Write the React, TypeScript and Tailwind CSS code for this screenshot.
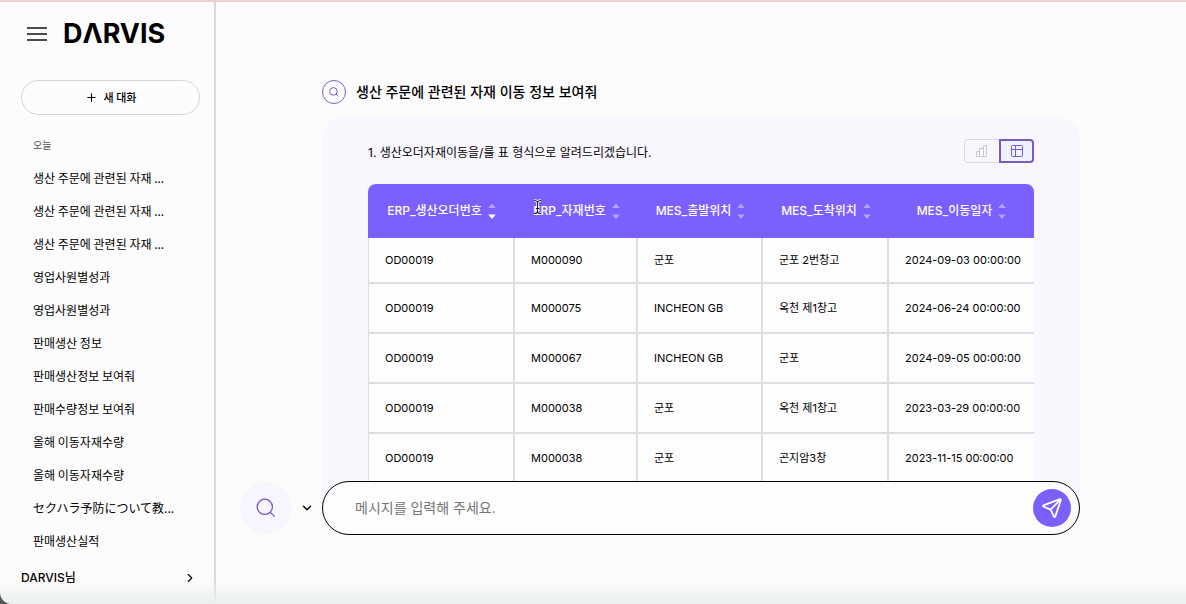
import { ChevronDown, ChevronRight, Plus } from "lucide-react";

type Movement = {
  order: string;
  material: string;
  from: string;
  to: string;
  date: string;
};

const history = [
  "생산 주문에 관련된 자재 ...",
  "생산 주문에 관련된 자재 ...",
  "생산 주문에 관련된 자재 ...",
  "영업사원별성과",
  "영업사원별성과",
  "판매생산 정보",
  "판매생산정보 보여줘",
  "판매수량정보 보여줘",
  "올해 이동자재수량",
  "올해 이동자재수량",
  "セクハラ予防について教...",
  "판매생산실적",
];

const columns = [
  { label: "ERP_생산오더번호", width: "w-[147px]", sorted: true },
  { label: "ERP_자재번호", width: "w-[123px]", hovered: true },
  { label: "MES_출발위치", width: "w-[125px]" },
  { label: "MES_도착위치", width: "w-[126px]" },
  { label: "MES_이동일자", width: "w-auto" },
];

const movements: Movement[] = [
  { order: "OD00019", material: "M000090", from: "군포", to: "군포 2번창고", date: "2024-09-03 00:00:00" },
  { order: "OD00019", material: "M000075", from: "INCHEON GB", to: "옥천 제1창고", date: "2024-06-24 00:00:00" },
  { order: "OD00019", material: "M000067", from: "INCHEON GB", to: "군포", date: "2024-09-05 00:00:00" },
  { order: "OD00019", material: "M000038", from: "군포", to: "옥천 제1창고", date: "2023-03-29 00:00:00" },
  { order: "OD00019", material: "M000038", from: "군포", to: "곤지암3창", date: "2023-11-15 00:00:00" },
];

const SearchIcon = ({ className }: { className: string }) => (
  <svg viewBox="0 0 20 20" fill="none" stroke="currentColor" className={className}>
    <circle cx="8.8" cy="8.8" r="7.6" />
    <path d="M14.2 14.2 L18.6 18.6" />
  </svg>
);

const SortArrows = ({ sorted }: { sorted?: boolean }) => (
  <svg viewBox="0 0 8 16" className="h-4 w-2 shrink-0">
    <path d="M4 0.5 L7.8 5 H0.2 Z" fill="#b3a2ff" />
    <path d="M4 16 L7.8 11.5 H0.2 Z" fill={sorted ? "#ffffff" : "#b3a2ff"} />
  </svg>
);

// text cursor resting over a header label
const TextCursor = () => (
  <svg viewBox="0 0 9 16" className="absolute -top-1 left-0 h-4 w-[9px]" fill="none">
    <path d="M1 1.5 Q4.5 1.5 4.5 3.5 Q4.5 1.5 8 1.5 M4.5 3 V13 M1 14.5 Q4.5 14.5 4.5 12.5 Q4.5 14.5 8 14.5 M3 9.5 H6" stroke="#fff" strokeWidth="2.6" />
    <path d="M1 1.5 Q4.5 1.5 4.5 3.5 Q4.5 1.5 8 1.5 M4.5 3 V13 M1 14.5 Q4.5 14.5 4.5 12.5 Q4.5 14.5 8 14.5 M3 9.5 H6" stroke="#222" strokeWidth="1.1" />
  </svg>
);

const Sidebar = () => (
  <aside className="flex w-54 shrink-0 flex-col border-r-2 border-[#dadada] font-['Noto_Sans_CJK_KR',sans-serif]">
    <div className="flex h-16 items-center gap-4 pl-[27px] font-['Inter',sans-serif]">
      <button aria-label="메뉴">
        <svg viewBox="0 0 20 14" className="h-[14px] w-5" stroke="#111" strokeWidth="1.6">
          <path d="M0 1 H20 M0 7 H20 M0 13 H20" />
        </svg>
      </button>
      <a href="#" aria-label="DARVIS" className="text-[27px] leading-8 font-bold">
        DΛRVIS
      </a>
    </div>
    <button className="mt-[14px] mr-[14px] ml-[21px] flex h-[35px] shrink-0 items-center justify-center gap-[6px] rounded-full border border-[#d5d3df] text-[11px] font-medium">
      <Plus size={13} strokeWidth={2} />
      새 대화
    </button>
    <h2 className="mt-[22px] pl-[33px] text-[10px] leading-4 text-[#555]">오늘</h2>
    <ul className="mt-2 flex-1">
      {history.map((title, i) => (
        <li key={i}>
          <a href="#" className="block h-[33px] truncate pr-6 pl-[33px] leading-[33px]">
            {title}
          </a>
        </li>
      ))}
    </ul>
    <button className="mb-4 flex h-5 items-center justify-between pr-[17px] pl-[21px] font-['Inter','Noto_Sans_CJK_KR',sans-serif] font-medium">
      DARVIS님
      <ChevronRight size={14} strokeWidth={2} />
    </button>
  </aside>
);

const ViewToggle = () => (
  <div className="flex h-6">
    <button aria-label="차트" className="flex w-[35px] items-center justify-center rounded-l border border-r-0 border-[#dcdde3] text-[#c9c9d0]">
      <svg viewBox="0 0 12 12" className="size-3" fill="none" stroke="currentColor">
        <path d="M0.5 11.5 V6.5 H3.5 V11.5 Z M3.5 11.5 V3.5 H7.5 V11.5 M7.5 11.5 V0.5 H10.5 V11.5 H3.5" />
      </svg>
    </button>
    <button aria-label="표" className="flex w-[35px] items-center justify-center rounded-r border-2 border-[#7b58c8] bg-[#edf3fd] text-[#7b58d8]">
      <svg viewBox="0 0 12 12" className="size-3" fill="none" stroke="currentColor">
        <rect x="0.5" y="0.5" width="11" height="11" rx="1" />
        <path d="M4.5 0.5 V11.5 M0.5 4.5 H11.5" />
      </svg>
    </button>
  </div>
);

const MovementTable = () => (
  <div className="mt-[21px] overflow-hidden rounded-t-lg bg-[#fdfdfd]">
    <table className="w-full table-fixed border-separate border-spacing-0">
      <thead className="bg-[#7b5fff] text-white">
        <tr className="h-[54px]">
          {columns.map((col) => (
            <th key={col.label} className={`${col.width} px-1 font-medium`}>
              <button className="flex w-full items-center justify-center gap-[6px] whitespace-nowrap">
                <span className="relative">
                  {col.label}
                  {col.hovered && <TextCursor />}
                </span>
                <SortArrows sorted={col.sorted} />
              </button>
            </th>
          ))}
        </tr>
      </thead>
      <tbody className="text-[11px] [&_td]:border-r-2 [&_td]:border-b-2 [&_td]:border-[#dddde2] [&_td]:pl-4 [&_td]:whitespace-nowrap [&_td:first-child]:border-l [&_td:last-child]:border-r-0">
        {movements.map((row, i) => (
          <tr key={i} className={i === 0 ? "h-[46px]" : "h-[50px]"}>
            <td>{row.order}</td>
            <td>{row.material}</td>
            <td>{row.from}</td>
            <td>{row.to}</td>
            <td>{row.date}</td>
          </tr>
        ))}
      </tbody>
    </table>
  </div>
);

const MessageBar = () => (
  <form className="relative z-10 -mt-[27px] mb-[69px] grid grid-cols-[1fr_minmax(0,758px)_1fr]">
    <div className="flex items-center justify-end gap-2 pr-2">
      <button type="button" aria-label="검색" className="flex size-[52px] items-center justify-center rounded-full bg-[#f8f5fe] text-[#6f5bc0]">
        <SearchIcon className="size-5 stroke-[1.3]" />
      </button>
      <button type="button" aria-label="검색 모드">
        <ChevronDown size={14} strokeWidth={2.4} />
      </button>
    </div>
    <div className="flex h-[54px] items-center rounded-full border border-black bg-[#fdfdfd] pr-2 pl-8">
      <input
        aria-label="메시지"
        placeholder="메시지를 입력해 주세요."
        className="min-w-0 flex-1 text-sm outline-none placeholder:text-[#757575]"
      />
      <button aria-label="보내기" className="flex size-[38px] items-center justify-center rounded-full bg-[#7b5fff]">
        <svg viewBox="0 0 20 20" className="size-5" fill="none" stroke="#fff" strokeWidth="1.8" strokeLinejoin="round" strokeLinecap="round">
          <path d="M18 1.2 L1.4 7.4 Q0.6 8 1.4 8.5 L8.6 11.6 L12 18.6 Q12.6 19.4 13.2 18.6 L18.8 2.2 Q18.9 1 18 1.2 Z" />
          <path d="M18.2 1.8 L8.6 11.6" />
        </svg>
      </button>
    </div>
  </form>
);

const App = () => {
  return (
    <div className="bg-[#555]">
      <div className="relative flex h-screen overflow-hidden rounded-bl-xl border-t-2 border-[#f0cfd2] bg-[#fcfcfc] font-['Inter','Noto_Sans_CJK_KR',sans-serif] text-xs text-black">
        <Sidebar />
        <main className="flex min-w-0 flex-1 flex-col">
          <section className="grid min-h-0 flex-1 grid-cols-[1fr_minmax(0,758px)_1fr] overflow-hidden">
            <div className="col-start-2 pt-[78px]">
              <div className="flex items-center gap-[10px]">
                <span className="flex size-6 items-center justify-center rounded-full border border-[#7b5fd0] text-[#7b5fd0]">
                  <SearchIcon className="size-[10px] stroke-2" />
                </span>
                <h1 className="text-sm font-medium">생산 주문에 관련된 자재 이동 정보 보여줘</h1>
              </div>
              <div className="mt-3 rounded-[24px] bg-[#f9f6fe] px-[46px] pt-[23px] pb-10">
                <div className="flex items-end justify-between">
                  <p className="leading-5">1. 생산오더자재이동을/를 표 형식으로 알려드리겠습니다.</p>
                  <ViewToggle />
                </div>
                <MovementTable />
              </div>
            </div>
          </section>
          <MessageBar />
        </main>
        <div className="pointer-events-none absolute inset-x-0 bottom-0 h-6 bg-linear-to-b from-transparent to-[#ebf0ef]" />
      </div>
    </div>
  );
};

export default App;
